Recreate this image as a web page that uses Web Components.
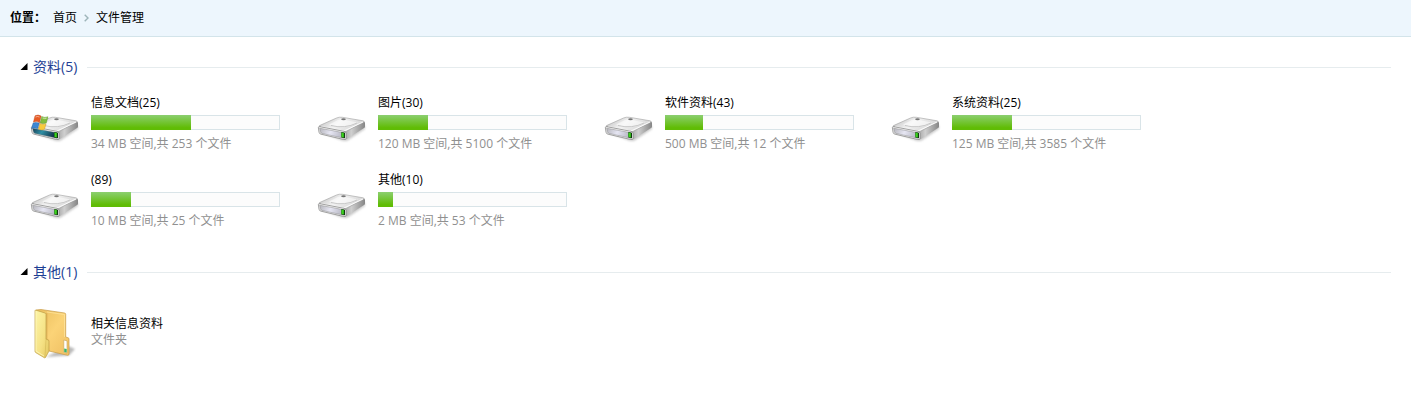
<!DOCTYPE html>
<html lang="zh-CN">
<head>
<meta charset="utf-8">
<title>文件管理</title>
<style>
  body { margin: 0; background: #fff; color: #000; font: 12px/16px "Open Sans", "Noto Sans CJK SC", sans-serif; }
</style>
</head>
<body>
<file-breadcrumb></file-breadcrumb>
<main>
  <file-section label="资料(5)">
    <disk-item icon="system" name="信息文档(25)" value="53" info="34 MB 空间,共 253 个文件"></disk-item>
    <disk-item name="图片(30)" value="26.5" info="120 MB 空间,共 5100 个文件"></disk-item>
    <disk-item name="软件资料(43)" value="20" info="500 MB 空间,共 12 个文件"></disk-item>
    <disk-item name="系统资料(25)" value="32" info="125 MB 空间,共 3585 个文件"></disk-item>
    <disk-item name="(89)" value="21" info="10 MB 空间,共 25 个文件"></disk-item>
    <disk-item name="其他(10)" value="8" info="2 MB 空间,共 53 个文件"></disk-item>
  </file-section>
  <file-section label="其他(1)">
    <folder-item name="相关信息资料" info="文件夹"></folder-item>
  </file-section>
</main>
<script>
class FileBreadcrumb extends HTMLElement {
  connectedCallback() {
    this.attachShadow({ mode: 'open' }).innerHTML = `
      <style>
        :host { display: block; background: #edf6fd; border-bottom: 1px solid #d3e4ea; }
        nav { display: flex; align-items: center; padding: 10px; }
        strong { margin-right: 7px; font-weight: 700; }
        a { color: #000; text-decoration: none; }
        svg { display: block; margin: 0 7px; }
      </style>
      <nav aria-label="位置">
        <strong>位置：</strong>
        <a href="#home">首页</a>
        <svg width="5" height="8" viewBox="0 0 5 8" fill="none" stroke="#9db4b9" stroke-width="1.4"><path d="M.7.7 4 4 .7 7.3"/></svg>
        <a href="#files">文件管理</a>
      </nav>`;
  }
}

class FileSection extends HTMLElement {
  connectedCallback() {
    this.attachShadow({ mode: 'open' }).innerHTML = `
      <style>
        :host { display: block; padding: 20px 20px 13px; }
        h2 { display: flex; align-items: center; gap: 10px; margin: 0 0 18px; font: inherit; }
        h2::after { content: ""; flex: 1; border-top: 1px solid #e6ecee; }
        button { display: flex; align-items: center; gap: 5px; padding: 0; border: 0; background: none; color: #1e3f94; font: inherit; font-size: 14px; line-height: 20px; cursor: pointer; }
        button[aria-expanded="false"] svg { transform: rotate(-45deg); }
        .grid { display: grid; grid-template-columns: repeat(auto-fill, 287px); row-gap: 20px; padding-left: 10px; }
        .grid[hidden] { display: none; }
      </style>
      <h2><button type="button" aria-expanded="true"><svg width="8" height="8" viewBox="0 0 8 8" aria-hidden="true"><path d="M7.500 0v7H.500z"/></svg><span></span></button></h2>
      <div class="grid"><slot></slot></div>`;
    const button = this.shadowRoot.querySelector('button');
    const grid = this.shadowRoot.querySelector('.grid');
    button.querySelector('span').textContent = this.getAttribute('label');
    button.addEventListener('click', () => {
      grid.hidden = !grid.hidden;
      button.setAttribute('aria-expanded', String(!grid.hidden));
    });
  }
}

class DiskIcon extends HTMLElement {
  connectedCallback() {
    const system = this.getAttribute('type') === 'system';
    this.attachShadow({ mode: 'open' }).innerHTML = `
      <style>
        :host { display: block; flex: none; }
        svg { display: block; overflow: visible; }
      </style>
      <svg width="48" height="48" viewBox="0 0 48 48" aria-hidden="true">
        <defs>
          <linearGradient id="top" x1="0" y1=".3" x2="1" y2=".7"><stop offset="0" stop-color="#c4c4c4"/><stop offset=".4" stop-color="#f2f2f2"/><stop offset="1" stop-color="#cfcfcf"/></linearGradient>
          <linearGradient id="side" x1="0" y1="0" x2="1" y2="0"><stop offset="0" stop-color="#a4a4a4"/><stop offset=".35" stop-color="#cfcfcf"/><stop offset="1" stop-color="#858585"/></linearGradient>
          <linearGradient id="front" x1="0" y1="0" x2="1" y2=".2"><stop offset="0" stop-color="#b4b4ba"/><stop offset=".5" stop-color="#e6e6f3"/><stop offset="1" stop-color="#babac6"/></linearGradient>
          <linearGradient id="teal" x1="0" y1="0" x2="1" y2=".3"><stop offset="0" stop-color="#173f55"/><stop offset=".45" stop-color="#2f8fa5"/><stop offset="1" stop-color="#123349"/></linearGradient>
          <filter id="soft" x="-20%" y="-20%" width="140%" height="140%"><feGaussianBlur stdDeviation="1"/></filter>
        </defs>
        <path d="M2 28 26 37H30L48 25V21L29 29z" fill="#999" opacity=".5" filter="url(#soft)"/>
        <path d="M27 26 47 17.500q1 .5 1 1.500v3.500q0 1-1 1.600L30 35q-1 .7-3 .6z" fill="url(#side)"/>
        <path d="M2.500 21.600 19.500 14q2.500-1.200 6-.7L46 16.800q2 .6.6 1.500L29.500 27.300q-1.500.6-3.200.2L3 22.900q-1.500-.6-.5-1.300z" fill="url(#top)" stroke="#a0a0a0" stroke-width=".6"/>
        <path d="M12 20.500 21 16q2-.9 4-.5L41 18.500q-7 4.500-14 4.700T12 20.500z" fill="#fff" opacity=".55"/>
        <path d="M14 21.500q14 3.500 26-2.500" fill="none" stroke="#b5b5b5" stroke-width=".7"/>
        <path d="M4 22.600 27 27 46 18" fill="none" stroke="#fff" stroke-width=".9"/>
        <ellipse cx="26.500" cy="15.200" rx="2.300" ry="1" fill="#777"/>
        <path d="M1.300 23.300q.4-.9 1.700-.6L27 27.300q2 .4 2 2v5q0 1.700-2.300 1.200L4 30.200q-1.700-.4-2-2z" fill="#f4f4f4" stroke="#7e7e7e" stroke-width=".7"/>
        <path d="M2.600 24.200 27 28.800v5.500L5 29.400q-1.500-.4-1.700-1.800z" fill="url(#${system ? 'teal' : 'front'})" stroke="#777" stroke-width=".4"/>
        <path d="M24.300 28 28 28.700v5.500l-3.700-.8z" fill="#103b10"/>
        <path d="M24.500 28.400 26.800 28.900v4.600l-2.300-.5z" fill="#3bd51c"/>
        ${system ? `
        <path d="M5 11.800q3-1.800 6.200.3L9.600 18.500q-3-1.600-6.200-.3z" fill="#e75b24" stroke="#b94720" stroke-width=".4"/>
        <path d="M11.800 12.500q3 1.700 6.200.2l-1.700 6.200q-3 1.500-6.100-.2z" fill="#82bd3d" stroke="#55922c" stroke-width=".4"/>
        <path d="M3.100 19q3-1.300 6.200.3l-1.700 5.500q-3-1.600-6.100-.2z" fill="#3c87d3" stroke="#25609c" stroke-width=".4"/>
        <path d="M10 19.500q3 1.600 6.100.2l-1.600 5.600q-3 1.500-6.100-.2z" fill="#f8ca3d" stroke="#c28f25" stroke-width=".4"/>
        <path d="M5.500 13q2-1 4 0M12.500 14q2 1 4 .3" fill="none" stroke="#fff" stroke-opacity=".5"/>` : ''}
      </svg>`;
  }
}

class DiskItem extends HTMLElement {
  connectedCallback() {
    this.attachShadow({ mode: 'open' }).innerHTML = `
      <style>
        :host { display: flex; align-items: flex-end; gap: 13px; }
        .text { width: 189px; }
        .name, .info { white-space: nowrap; }
        .info { color: #909090; }
        .track { height: 15px; margin: 4px 0 6px; background: #fcfcfc; box-shadow: inset 0 0 0 1px #d9e4e8; }
        .fill { height: 100%; background: linear-gradient(#8ccf70, #60bc05 85%); }
      </style>
      <disk-icon type="${this.getAttribute('icon') || 'drive'}"></disk-icon>
      <div class="text">
        <div class="name"></div>
        <div class="track" role="progressbar" aria-valuemin="0" aria-valuemax="100"><div class="fill"></div></div>
        <div class="info"></div>
      </div>`;
    const root = this.shadowRoot;
    const track = root.querySelector('.track');
    root.querySelector('.name').textContent = this.getAttribute('name');
    root.querySelector('.info').textContent = this.getAttribute('info');
    root.querySelector('.fill').style.width = this.getAttribute('value') + '%';
    track.setAttribute('aria-valuenow', this.getAttribute('value'));
    track.setAttribute('aria-label', this.getAttribute('name'));
  }
}

class FolderItem extends HTMLElement {
  connectedCallback() {
    this.attachShadow({ mode: 'open' }).innerHTML = `
      <style>
        :host { display: flex; align-items: center; gap: 13px; min-height: 64px; }
        svg { display: block; flex: none; overflow: visible; }
        .info { color: #909090; }
      </style>
      <svg width="48" height="48" viewBox="0 0 48 48" aria-hidden="true">
        <defs>
          <linearGradient id="back" x1="0" y1="0" x2="1" y2="1"><stop offset="0" stop-color="#e9bd5c"/><stop offset=".5" stop-color="#fbd377"/><stop offset="1" stop-color="#efbf62"/></linearGradient>
          <linearGradient id="flap" x1="0" y1="0" x2="1" y2="1"><stop offset="0" stop-color="#fdf6a8"/><stop offset=".6" stop-color="#f5e184"/><stop offset="1" stop-color="#e3c55e"/></linearGradient>
          <filter id="soft" x="-20%" y="-20%" width="140%" height="140%"><feGaussianBlur stdDeviation="1"/></filter>
        </defs>
        <path d="M16 49 39 47.500 45 41 38 38z" fill="#777" opacity=".5" filter="url(#soft)"/>
        <path d="M6 2 11 1.500 34.500 5q1.200.2 1.200 1.200V29l2.500.8q.8.300.8 1.200V46q0 1.500-1.500 1.300L19 43z" fill="url(#back)" stroke="#c99c47" stroke-width=".7"/>
        <path d="M17 4 34.500 6.500V29" fill="none" stroke="#ffe6a0" stroke-width=".7"/>
        <path d="M16 5 17.500 5.200V31L19 32V42L16 43z" fill="#c9963f" opacity=".4"/>
        <path d="M33.800 32 37 32.900V45l-3.200-.8z" fill="#fff" stroke="#c6a35a" stroke-width=".6"/>
        <path d="m34.200 40.500 2.500.6v3.500l-2.500-.6z" fill="#3db36a"/>
        <path d="M5 2.700Q5 1.900 6 2.200L15 5q1 .4 1 1.500V31l2.500 1.200q.5.300.5 1V43L15.500 49.500q-.5.800-1.200.2L5.600 44.500Q5 44 5 43z" fill="url(#flap)" stroke="#bd9d45" stroke-width=".7"/>
        <path d="M6 3v40l8 5" fill="none" stroke="#fff9c4" stroke-width=".7"/>
        <path d="M16 31 15 49" fill="none" stroke="#cdb14f" stroke-width=".5"/>
      </svg>
      <div><div class="name"></div><div class="info"></div></div>`;
    this.shadowRoot.querySelector('.name').textContent = this.getAttribute('name');
    this.shadowRoot.querySelector('.info').textContent = this.getAttribute('info');
  }
}

customElements.define('disk-icon', DiskIcon);
customElements.define('disk-item', DiskItem);
customElements.define('folder-item', FolderItem);
customElements.define('file-section', FileSection);
customElements.define('file-breadcrumb', FileBreadcrumb);
</script>
</body>
</html>
